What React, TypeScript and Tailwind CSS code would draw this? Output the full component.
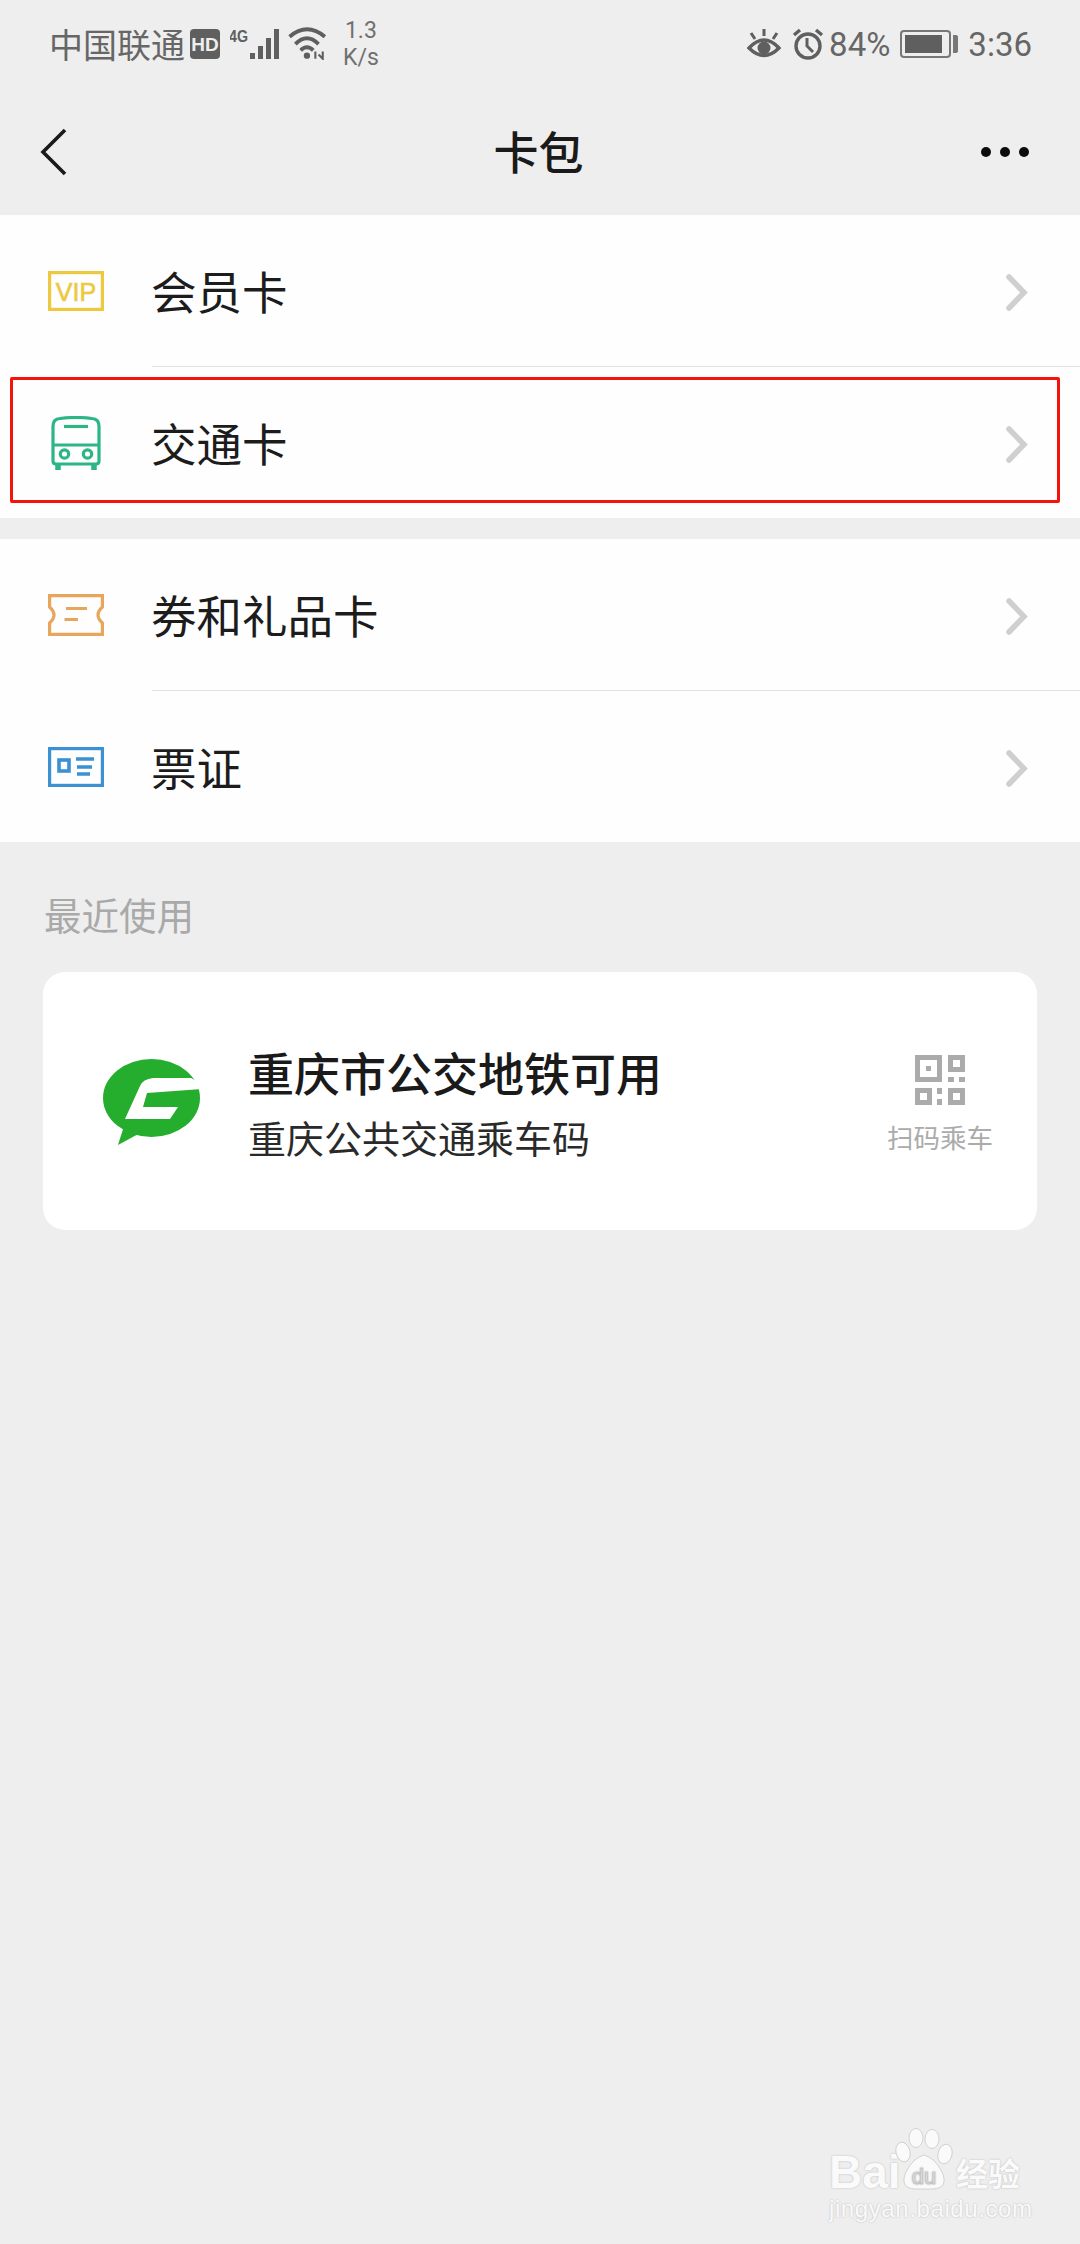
import React from "react";

const cjk = "font-['Noto_Sans_CJK_SC','Noto_Sans',sans-serif]";

const Chevron = () => (
	<svg width="22" height="37" viewBox="0 0 22 37" fill="none" className="shrink-0 mt-[3px]">
		<path d="M3 3 L18 18.5 L3 34" stroke="#cfcfcf" strokeWidth="5.5" strokeLinecap="round" strokeLinejoin="miter" />
	</svg>
);

const VipIcon = () => (
	<svg width="56" height="40" viewBox="0 0 56 40" fill="none">
		<rect x="1.6" y="1.6" width="52.8" height="36.8" stroke="#ecc93e" strokeWidth="3.2" />
		<text x="28" y="29.5" textAnchor="middle" fontFamily="Liberation Sans" fontSize="25" stroke="#ecc93e" strokeWidth="0.6" fill="#ecc93e">VIP</text>
	</svg>
);

const BusIcon = () => (
	<svg width="50" height="56" viewBox="0 0 50 56" fill="none" stroke="#2cb585" strokeWidth="3.2" className="mt-[2px]">
		<path d="M2 10 Q2 3 9 2.5 Q25 0.5 41 2.5 Q48 3 48 10 V45 Q48 48 45 48 H5 Q2 48 2 45 Z" />
		<path d="M2 29 H48" />
		<path d="M13 10.5 H37" strokeWidth="3.2" />
		<circle cx="13.5" cy="38" r="4.2" />
		<circle cx="36.5" cy="38" r="4.2" />
		<path d="M7 48 V54 M43 48 V54" strokeWidth="5.5" />
	</svg>
);

const TicketIcon = () => (
	<svg width="56" height="42" viewBox="0 0 56 42" fill="none" stroke="#e8a65c" strokeWidth="3.2">
		<path d="M1.6 1.6 H54.4 V13 Q50 17 50 21 Q50 25 54.4 29 V40.4 H1.6 V29 Q6 25 6 21 Q6 17 1.6 13 Z" />
		<path d="M18 14.5 H39 M16.5 25.5 H30" strokeWidth="3.2" />
	</svg>
);

const IdIcon = () => (
	<svg width="56" height="40" viewBox="0 0 56 40" fill="none" stroke="#3b91d1" strokeWidth="3.2">
		<rect x="1.6" y="1.6" width="52.8" height="36.8" />
		<rect x="11" y="13" width="10" height="11" strokeWidth="3.6" />
		<path d="M28 12 H46 M29 20 H44 M29 27 H42" strokeWidth="3.4" />
	</svg>
);

const Row = ({ icon, label, last, mark }: { icon: React.ReactNode; label: string; last?: boolean; mark?: boolean }) => (
	<div className={`relative flex ${last ? "h-[151px]" : "h-[152px]"}`}>
		<div className="w-[152px] shrink-0 flex items-center justify-center pr-[1px]">{icon}</div>
		<div className={`flex-1 flex items-center justify-between pr-[52px] ${last ? "" : "border-b border-[#e2e2e2]"}`}>
			<span className="text-[45.5px] leading-none text-[#1c1c1c] -ml-[1px]">{label}</span>
			<Chevron />
		</div>
		{mark && <div className="absolute left-[10px] top-[10px] w-[1050px] h-[126px] border-[3px] border-[#f5140c] rounded-[2px]" />}
	</div>
);

const StatusLeft = () => (
	<div className="flex items-center text-[#666666]">
		<span className="text-[34px] leading-none">中国联通</span>
		<div className="ml-[5px] w-[30px] h-[30px] rounded-[4px] bg-[#5f5f5f] flex items-center justify-center text-[#eeeeee] font-['Liberation_Sans',sans-serif] font-bold text-[19px] leading-none">
			HD
		</div>
		<svg width="50" height="32" viewBox="0 0 50 32" className="ml-[10px]" fill="#5f5f5f">
			<text x="-1" y="14" fontFamily="Liberation Sans" fontWeight="700" fontSize="17" textLength="19" lengthAdjust="spacingAndGlyphs">4G</text>
			<rect x="20" y="25" width="5" height="6" />
			<rect x="28" y="18" width="5" height="13" />
			<rect x="36" y="10" width="5" height="21" />
			<rect x="44" y="1" width="5" height="30" />
		</svg>
		<svg width="40" height="34" viewBox="0 0 38 32" className="ml-[8px] -mt-[3px]" fill="none" stroke="#5f5f5f" strokeWidth="3.6">
			<path d="M1.5 10 Q18 -4 35 10" />
			<path d="M7 17 Q18 6 29 17" />
			<path d="M12 23 Q18 17 24 23" />
			<circle cx="18" cy="28" r="3" fill="#5f5f5f" stroke="none" />
			<path d="M26 24 V31 M33 24 L33 31 L29 27" strokeWidth="2" />
		</svg>
		<div className="ml-[15px] flex flex-col items-center font-['Roboto',sans-serif] text-[23px] leading-[27px] text-[#707070]">
			<span>1.3</span>
			<span>K/s</span>
		</div>
	</div>
);

const StatusRight = () => (
	<div className="flex items-center text-[#666666] font-['Roboto',sans-serif] text-[33px] leading-none">
		<svg width="34" height="30" viewBox="0 0 34 30" fill="none" stroke="#5f5f5f" strokeWidth="3.4">
			<path d="M2 19 Q17 3 32 19 Q17 34 2 19 Z" />
			<circle cx="17" cy="19" r="6.5" fill="#5f5f5f" stroke="none" />
			<path d="M17 0 V7 M4 4 L8 10 M30 4 L26 10" strokeWidth="3" />
		</svg>
		<svg width="32" height="32" viewBox="0 0 32 32" fill="none" stroke="#5f5f5f" strokeWidth="3.4" className="ml-[11px]">
			<circle cx="16" cy="18" r="12" />
			<path d="M15 10 V18 L21 24" strokeWidth="3" />
			<path d="M2 7 L8 2 M30 7 L24 2" strokeWidth="3.4" />
		</svg>
		<span className="ml-[5px]">84%</span>
		<div className="ml-[10px] w-[51px] h-[28px] border-[2px] border-[#777777] rounded-[4px] p-[3px]">
			<div className="w-[37px] h-full bg-[#5f5f5f]" />
		</div>
		<div className="ml-[2px] w-[5px] h-[18px] bg-[#777777] rounded-r-[2px]" />
		<span className="ml-[10px]">3:36</span>
	</div>
);

const GLogo = () => (
	<svg width="125" height="110" viewBox="0 0 125 110" className="shrink-0 ml-[47px]">
		<ellipse cx="61.5" cy="52" rx="48.5" ry="39" fill="#25ad2e" />
		<path d="M34 80 L28 99 L52 86 Z" fill="#25ad2e" />
		<path d="M101 32 L63 32 Q53 33 50 40 L35 73 L80 73 L88 61 L53 61 L57 47 L112 43 L112 38 Z" fill="#ffffff" />
	</svg>
);

const QrIcon = () => (
	<svg width="50" height="50" viewBox="0 0 50 50" fill="#ababab">
		<path fillRule="evenodd" d="M0 0 H27 V27 H0 Z M5 5 V22 H22 V5 Z" />
		<rect x="11" y="11" width="5" height="5" />
		<path fillRule="evenodd" d="M33 0 H50 V17 H33 Z M38 5 V12 H45 V5 Z" />
		<rect x="33" y="22" width="6" height="5" />
		<rect x="44" y="22" width="6" height="5" />
		<path fillRule="evenodd" d="M0 33 H17 V50 H0 Z M5 38 V45 H12 V38 Z" />
		<rect x="22" y="33" width="5" height="6" />
		<rect x="22" y="44" width="5" height="6" />
		<path fillRule="evenodd" d="M33 33 H50 V50 H33 Z M38 38 V45 H45 V38 Z" />
	</svg>
);

const Watermark = () => (
	<div className="absolute left-[829px] top-[2128px] w-[200px] font-['Liberation_Sans',sans-serif] text-[#fafafa] [text-shadow:0_0_2px_#b5b5b5]">
		<div className="flex items-end h-[62px]">
			<span className="text-[46px] leading-[38px] font-bold w-[66px] -mb-[1px]">Bai</span>
			<svg width="58" height="62" viewBox="0 0 58 62" className="shrink-0" fill="#fafafa" stroke="#c9c9c9" strokeWidth="0.8">
				<ellipse cx="8" cy="24" rx="7" ry="10" transform="rotate(-15 8 24)" />
				<ellipse cx="21" cy="10" rx="7" ry="9.5" />
				<ellipse cx="37" cy="11" rx="7" ry="9.5" />
				<ellipse cx="50" cy="26" rx="7" ry="10" transform="rotate(15 50 26)" />
				<path d="M29 27 Q40 30 47 44 Q54 60 38 61 H20 Q4 60 11 44 Q18 30 29 27 Z" />
				<text x="29" y="56" textAnchor="middle" fontFamily="Liberation Sans" fontSize="22" fill="#f0f0f0" stroke="#bdbdbd" strokeWidth="0.6">du</text>
			</svg>
			<span className={`${cjk} ml-[3px] text-[32px] leading-[36px] font-bold`}>经验</span>
		</div>
		<div className="mt-[6px] text-[24px] leading-[26px] tracking-[0.6px] whitespace-nowrap">jingyan.baidu.com</div>
	</div>
);

export default function App() {
	return (
		<div className={`relative w-[1080px] h-[2244px] overflow-hidden bg-[#eeeeee] ${cjk}`}>
			<div className="h-[88px] flex items-center justify-between pl-[49px] pr-[48px]">
				<StatusLeft />
				<StatusRight />
			</div>
			<div className="h-[127px] flex items-center">
				<div className="flex-1 pl-[40px]">
					<svg width="28" height="48" viewBox="0 0 28 48" fill="none">
						<path d="M25 2 L3 24 L25 46" stroke="#1a1a1a" strokeWidth="3.6" />
					</svg>
				</div>
				<h1 className="ml-[8px] text-[45px] leading-none font-medium text-[#1a1a1a] -mt-[2px]">卡包</h1>
				<div className="flex-1 flex justify-end gap-[9px] pr-[51px]">
					<span className="w-[10px] h-[10px] rounded-full bg-[#0c0c0c]" />
					<span className="w-[10px] h-[10px] rounded-full bg-[#0c0c0c]" />
					<span className="w-[10px] h-[10px] rounded-full bg-[#0c0c0c]" />
				</div>
			</div>

			<div className="bg-[#fefefe]">
				<Row icon={<VipIcon />} label="会员卡" />
				<Row icon={<BusIcon />} label="交通卡" last mark />
			</div>

			<div className="mt-[21px] bg-[#fefefe]">
				<Row icon={<TicketIcon />} label="券和礼品卡" />
				<Row icon={<IdIcon />} label="票证" last />
			</div>

			<div className="pl-[44px] pt-[47px] pb-[33px] text-[37.5px] leading-[50px] text-[#a9a9a9]">最近使用</div>

			<div className="ml-[43px] w-[994px] h-[258px] rounded-[22px] bg-white flex items-center">
				<GLogo />
				<div className="ml-[33px]">
					<div className="text-[46px] leading-[60px] font-medium text-[#1a1a1a]">重庆市公交地铁可用</div>
					<div className="mt-[11px] text-[38px] leading-[50px] text-[#2a2a2a]">重庆公共交通乘车码</div>
				</div>
				<div className="ml-auto mr-[44px] mt-[5px] flex flex-col items-center gap-[17px]">
					<QrIcon />
					<span className="text-[26.5px] leading-[30px] text-[#ababab]">扫码乘车</span>
				</div>
			</div>

			<Watermark />
		</div>
	);
}
